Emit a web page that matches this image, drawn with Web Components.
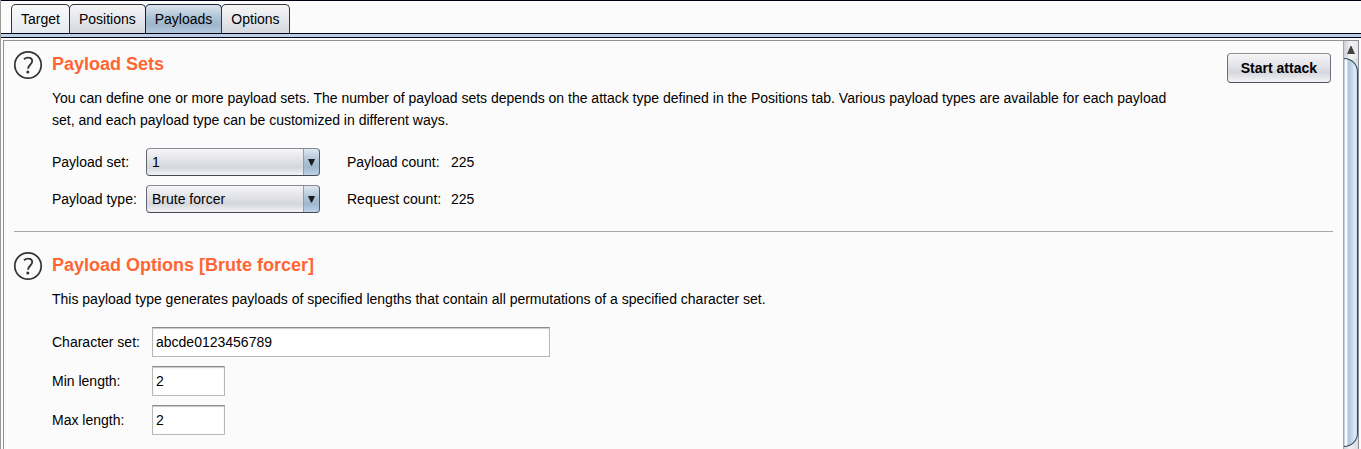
<!DOCTYPE html>
<html lang="en">
<head>
<meta charset="utf-8">
<title>Payloads</title>
<style>
html, body {
    height: 100%;
    margin: 0;
}
body {
    background: #fbfbfb;
    color: #000;
    font: 14px/22px "Liberation Sans", Arial, sans-serif;
}
.combos, .fields {
    display: grid;
    gap: 9px;
}
.combos {
    grid-template-columns: auto 1fr;
    column-gap: 27px;
}
</style>
</head>
<body>
<app-window>
    <tab-bar slot="tabs">
        <tab-item>Target</tab-item>
        <tab-item>Positions</tab-item>
        <tab-item selected>Payloads</tab-item>
        <tab-item>Options</tab-item>
    </tab-bar>
    <option-section>
        <span slot="title">Payload Sets</span>
        <push-button slot="action">Start attack</push-button>
        <span slot="text">You can define one or more payload sets. The number of payload sets depends on the attack type defined in the Positions tab. Various payload types are available for each payload set, and each payload type can be customized in different ways.</span>
        <div class="combos">
            <combo-field label="Payload set:" options="1"></combo-field>
            <count-label label="Payload count:">225</count-label>
            <combo-field label="Payload type:" options="Brute forcer"></combo-field>
            <count-label label="Request count:">225</count-label>
        </div>
    </option-section>
    <option-section>
        <span slot="title">Payload Options [Brute forcer]</span>
        <span slot="text">This payload type generates payloads of specified lengths that contain all permutations of a specified character set.</span>
        <div class="fields">
            <text-field label="Character set:" value="abcde0123456789" wide></text-field>
            <text-field label="Min length:" value="2"></text-field>
            <text-field label="Max length:" value="2"></text-field>
        </div>
    </option-section>
    <scroll-bar slot="scroll"></scroll-bar>
</app-window>

<script>
// attach a shadow root and fill it from a template
class BaseElement extends HTMLElement {
  constructor() {
    super();
    const template = document.createElement("template");
    template.innerHTML = this.constructor.markup;
    this.attachShadow({ mode: "open" });
    this.shadowRoot.appendChild(template.content.cloneNode(true));
  }
}

class AppWindow extends BaseElement {
  static markup = `
<style>
:host {
    box-sizing: border-box;
    display: flex;
    flex-direction: column;
    height: 100%;
    border-left: 1px solid #9a9a9a;
    overflow: hidden;
}
header {
    border-top: 1px solid #000014;
    padding: 3px 10px 0;
}
.strip {
    flex: none;
    height: 3px;
    background: #b8cfe5;
    border-top: 1px solid #000014;
    border-bottom: 1px solid #000014;
}
.pane {
    flex: 1;
    min-height: 0;
    display: flex;
    margin: 2px 2px 0;
    border: 1px solid #8f8f98;
    border-bottom: none;
}
main {
    flex: 1;
    min-width: 0;
    overflow: hidden;
    padding: 0 10px;
}
</style>
<header><slot name="tabs"></slot></header>
<div class="strip"></div>
<div class="pane">
    <main><slot></slot></main>
    <slot name="scroll"></slot>
</div>`;
}

class TabBar extends BaseElement {
  static markup = `
<style>
:host {
    display: flex;
}
</style>
<slot></slot>`;

  connectedCallback() {
    this.setAttribute("role", "tablist");
    this.addEventListener("click", (e) => {
      const tab = e.target.closest("tab-item");
      if (!tab) return;
      this.querySelectorAll("tab-item").forEach((t) => t.toggleAttribute("selected", t === tab));
    });
  }
}

class TabItem extends BaseElement {
  static markup = `
<style>
:host {
    display: block;
}
button {
    box-sizing: border-box;
    display: block;
    height: 29px;
    margin: 0 -1px 0 0;
    padding: 0 9px;
    color: inherit;
    font: inherit;
    background: linear-gradient(#f6f6f8, #d6d8df);
    border: 1px solid #33333f;
    border-bottom: none;
    border-radius: 5px 5px 0 0;
}
:host(:first-child) button {
    background: linear-gradient(#f8f9fb, #e6ebf2);
}
:host([selected]) button {
    background: linear-gradient(#dbe5ed, #a9bfd3 50%, #9fb6cc 70%, #b3c9de);
    border-color: #16222e;
}
:host(:last-child) button {
    margin-right: 0;
}
</style>
<button type="button" role="tab"><slot></slot></button>`;
}

class OptionSection extends BaseElement {
  static markup = `
<style>
:host {
    display: grid;
    grid-template-columns: 28px minmax(0, 1fr) auto;
    column-gap: 10px;
    padding: 19px 0 18px;
}
:host(:first-of-type) {
    padding-top: 9px;
    border-bottom: 1px solid #a5a5ad;
}
svg {
    display: block;
    width: 30px;
    height: 30px;
    margin-left: -1px;
}
.info {
    padding-right: 28px;
}
h2 {
    margin: 3px 0 12px;
    color: #ff6633;
    font-size: 18px;
    line-height: 22px;
}
p {
    margin: 0 0 17px;
}
.action {
    padding: 3px 2px 0 0;
}
</style>
<svg viewBox="0 0 30 30" role="img" aria-label="Help" fill="none" stroke="#333" stroke-width="1.8">
    <circle cx="15" cy="15" r="13.2" stroke-width="1.7"/>
    <path d="M11 9.200c1.400-1.200 2.900-1.600 4.400-1.500 2.300.1 3.800 1.400 3.800 3.400 0 3.600-4.200 3.700-4.200 7.600"/>
    <circle cx="14.800" cy="22" r="1.500" fill="#333" stroke="none"/>
</svg>
<div class="info">
    <h2><slot name="title"></slot></h2>
    <p><slot name="text"></slot></p>
    <slot></slot>
</div>
<div class="action"><slot name="action"></slot></div>`;
}

class PushButton extends BaseElement {
  static markup = `
<style>
:host {
    display: block;
}
button {
    box-sizing: border-box;
    height: 30px;
    padding: 0 13px;
    color: #000;
    font: inherit;
    font-weight: bold;
    background: linear-gradient(#f6f6f8, #dfe0e5 50%, #d5d7dd 65%, #f3f4f7);
    border: 1px solid #70707a;
    border-top-color: #909098;
    border-bottom-color: #505058;
    border-radius: 4px;
}
</style>
<button type="button"><slot></slot></button>`;
}

class ComboField extends BaseElement {
  static markup = `
<style>
:host {
    display: grid;
    grid-template-columns: 94px 174px;
    align-items: center;
}
.combo {
    position: relative;
    display: flex;
}
select {
    appearance: none;
    box-sizing: border-box;
    width: 100%;
    height: 28px;
    padding: 0 20px 0 5px;
    color: #000;
    font: inherit;
    background:
        linear-gradient(#dde7f0, #a9bfd3 50%, #a0b8ce 70%, #bdd4ea) right / 15px 100% no-repeat,
        linear-gradient(#8fa0b2, #8fa0b2) right / 16px 100% no-repeat,
        linear-gradient(#f6f6f8, #dfe0e5 50%, #d5d7dd 70%, #f3f4f7);
    border: 1px solid #666670;
    border-top-color: #8a8a94;
    border-right-color: #4b5a68;
    border-bottom-color: #484852;
    border-radius: 4px;
}
svg {
    position: absolute;
    right: 5px;
    top: 11px;
    width: 7px;
    height: 7px;
    fill: #1c1c1c;
    pointer-events: none;
}
</style>
<label for="combo"></label>
<div class="combo">
    <select id="combo"></select>
    <svg viewBox="0 0 7 7"><path d="M0 0h7L4 6.500H3z"/></svg>
</div>`;

  connectedCallback() {
    const select = this.shadowRoot.querySelector("select");
    this.shadowRoot.querySelector("label").textContent = this.getAttribute("label");
    this.getAttribute("options").split("|").forEach((text) => select.add(new Option(text)));
  }
}

class CountLabel extends BaseElement {
  static markup = `
<style>
:host {
    display: grid;
    grid-template-columns: 104px auto;
    justify-content: start;
    align-items: center;
}
</style>
<span id="label"></span>
<output aria-labelledby="label"><slot></slot></output>`;

  connectedCallback() {
    this.shadowRoot.querySelector("#label").textContent = this.getAttribute("label");
  }
}

class TextField extends BaseElement {
  static markup = `
<style>
:host {
    display: grid;
    grid-template-columns: 100px 73px;
    align-items: center;
}
:host([wide]) {
    grid-template-columns: 100px 398px;
}
input {
    box-sizing: border-box;
    width: 100%;
    height: 30px;
    padding: 0 3px;
    color: #000;
    font: inherit;
    background: #fff;
    border: 1px solid #b8b8b8;
    border-top-color: #8c8c8c;
    border-radius: 0;
    box-shadow: inset 0 1px 1px #c8c8c8;
}
</style>
<label for="field"></label>
<input id="field" type="text">`;

  connectedCallback() {
    this.shadowRoot.querySelector("label").textContent = this.getAttribute("label");
    this.shadowRoot.querySelector("input").value = this.getAttribute("value");
  }
}

class ScrollBar extends BaseElement {
  static markup = `
<style>
:host {
    flex: none;
    display: flex;
    flex-direction: column;
    width: 14px;
    border-left: 1px solid #a3a8b0;
    background: linear-gradient(to right, #d0d0d6, #f0f0f3 40%, #dadae0);
}
button {
    flex: none;
    display: flex;
    justify-content: center;
    align-items: center;
    height: 17px;
    padding: 0;
    background: linear-gradient(to right, #cfd0d6, #f3f3f6 50%, #e6e6ea);
    border: none;
}
.thumb {
    flex: 1;
    margin-bottom: 2px;
    background: linear-gradient(to right, #9bb0c4, #fff 10%, #f4f9fd 20%, #b2c8dc 32%, #b5cbde 45%, #dcedf9 85%, #c7dcec);
    border: 1px solid #2f4658;
    border-left: none;
    border-radius: 0 14px 14px 0;
}
</style>
<button type="button" aria-label="Scroll up">
    <svg width="8" height="8" viewBox="0 0 8 8" fill="#444"><path d="M3.500 0h1L8 8H0z"/></svg>
</button>
<div class="thumb"></div>`;
}

window.customElements.define("app-window", AppWindow);
window.customElements.define("tab-bar", TabBar);
window.customElements.define("tab-item", TabItem);
window.customElements.define("option-section", OptionSection);
window.customElements.define("push-button", PushButton);
window.customElements.define("combo-field", ComboField);
window.customElements.define("count-label", CountLabel);
window.customElements.define("text-field", TextField);
window.customElements.define("scroll-bar", ScrollBar);
</script>
</body>
</html>
